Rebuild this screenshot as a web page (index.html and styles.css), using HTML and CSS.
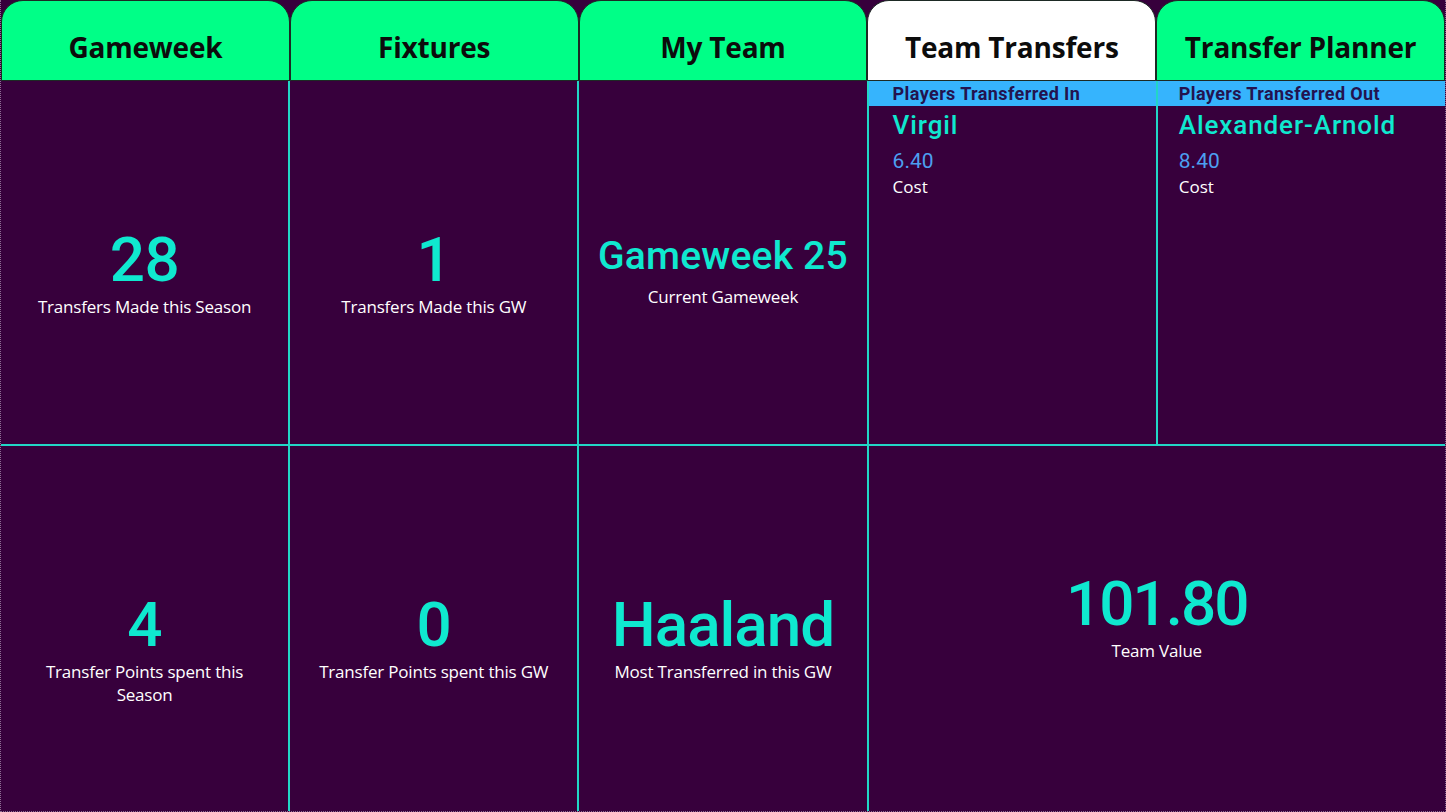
FILE: index.html
```html
<!DOCTYPE html>
<html>
<head>
<meta charset="utf-8">
<link rel="stylesheet" href="styles.css">
</head>
<body>
<div class="page">
  <nav class="tabs">
    <div class="tab">Gameweek</div>
    <div class="tab">Fixtures</div>
    <div class="tab">My Team</div>
    <div class="tab tab-active">Team Transfers</div>
    <div class="tab">Transfer Planner</div>
  </nav>
  <main class="grid">
    <section class="card card-top">
      <div class="value value-lg">28</div>
      <div class="label">Transfers Made this Season</div>
    </section>
    <section class="card card-top">
      <div class="value value-lg">1</div>
      <div class="label">Transfers Made this GW</div>
    </section>
    <section class="card card-gw">
      <div class="value value-md">Gameweek 25</div>
      <div class="label label-md">Current Gameweek</div>
    </section>
    <section class="player">
      <div class="player-head player-head-in">Players Transferred In</div>
      <div class="player-body player-body-in">
        <div class="player-name">Virgil</div>
        <div class="player-cost">6.40</div>
        <div class="player-cost-label">Cost</div>
      </div>
    </section>
    <section class="player">
      <div class="player-head player-head-out">Players Transferred Out</div>
      <div class="player-body player-body-out">
        <div class="player-name">Alexander-Arnold</div>
        <div class="player-cost">8.40</div>
        <div class="player-cost-label">Cost</div>
      </div>
    </section>

    <section class="card card-bottom">
      <div class="value value-lg">4</div>
      <div class="label label-wrap">Transfer Points spent this Season</div>
    </section>
    <section class="card card-bottom">
      <div class="value value-lg">0</div>
      <div class="label">Transfer Points spent this GW</div>
    </section>
    <section class="card card-bottom">
      <div class="value value-lg value-name">Haaland</div>
      <div class="label">Most Transferred in this GW</div>
    </section>
    <section class="card card-wide">
      <div class="value value-lg value-total">101.80</div>
      <div class="label">Team Value</div>
    </section>
  </main>
</div>
</body>
</html>
```

FILE: styles.css
```css
* { box-sizing: border-box; }

html, body {
  margin: 0;
  padding: 0;
  background: #37003c;
}

.page {
  width: 1446px;
  height: 812px;
  display: flex;
  flex-direction: column;
  background: #37003c;
  border-left: 1px dotted #8e6e94;
  border-right: 1px dotted #8e6e94;
  border-bottom: 1px dotted #8e6e94;
  overflow: hidden;
}

.tabs {
  display: grid;
  grid-template-columns: repeat(5, 1fr);
  height: 81px;
  flex: none;
}

.tab {
  background: #00ff87;
  border: 1px solid #1d2a24;
  border-radius: 22px 22px 0 0;
  display: flex;
  align-items: center;
  justify-content: center;
  padding-top: 12px;
  font-family: "Open Sans", "Noto Sans", sans-serif;
  font-weight: 700;
  font-size: 28px;
  color: #0c0c0c;
  letter-spacing: -0.2px;
}

.tab-active {
  background: #ffffff;
}

.grid {
  flex: 1;
  display: grid;
  grid-template-columns: repeat(5, 1fr);
  grid-template-rows: 363px 1fr;
  gap: 2px;
  background: #22d6c6;
}

.card {
  background: #37003c;
  display: flex;
  flex-direction: column;
  align-items: center;
  justify-content: flex-start;
  text-align: center;
}

.card-top {
  padding-top: 148px;
}

.card-gw {
  padding-top: 156px;
}

.card-bottom {
  padding-top: 148px;
}

.card-wide {
  grid-column: span 2;
  padding-top: 127px;
}

.value {
  font-family: "Roboto", "DejaVu Sans", sans-serif;
  font-weight: 500;
  color: #0fe8cf;
  line-height: 1;
}

.value-lg {
  font-size: 62px;
  letter-spacing: -0.5px;
}

.value-name {
  letter-spacing: -1px;
}

.value-total {
  letter-spacing: -2px;
}

.value-md {
  font-size: 39px;
  letter-spacing: 0.2px;
}

.label {
  font-family: "Open Sans", "Noto Sans", sans-serif;
  font-size: 17px;
  color: #ffffff;
  margin-top: 4px;
  line-height: 23px;
  letter-spacing: -0.2px;
}

.label-md {
  margin-top: 9px;
}

.label-wrap {
  max-width: 230px;
}

.player {
  background: #37003c;
  display: flex;
  flex-direction: column;
}

.player-head {
  background: #36b4fd;
  height: 25px;
  flex: none;
  font-family: "Roboto", "DejaVu Sans", sans-serif;
  font-weight: 700;
  font-size: 18px;
  letter-spacing: 0.4px;
  color: #23134f;
  display: flex;
  align-items: center;
}

.player-head-in { padding-left: 24px; }
.player-head-out { padding-left: 21px; }

.player-body {
  display: flex;
  flex-direction: column;
}

.player-body-in { padding-left: 24px; }
.player-body-out { padding-left: 21px; }

.player-name {
  font-family: "Roboto", "DejaVu Sans", sans-serif;
  font-weight: 500;
  font-size: 26px;
  letter-spacing: 0.9px;
  color: #0fe8cf;
  margin-top: 4px;
  line-height: 30px;
}

.player-cost {
  font-family: "Roboto", "DejaVu Sans", sans-serif;
  font-size: 21px;
  color: #4c9ff0;
  margin-top: 9px;
  line-height: 24px;
}

.player-cost-label {
  font-family: "Open Sans", "Noto Sans", sans-serif;
  font-size: 17px;
  color: #ffffff;
  line-height: 22px;
  margin-top: 3px;
}
```
